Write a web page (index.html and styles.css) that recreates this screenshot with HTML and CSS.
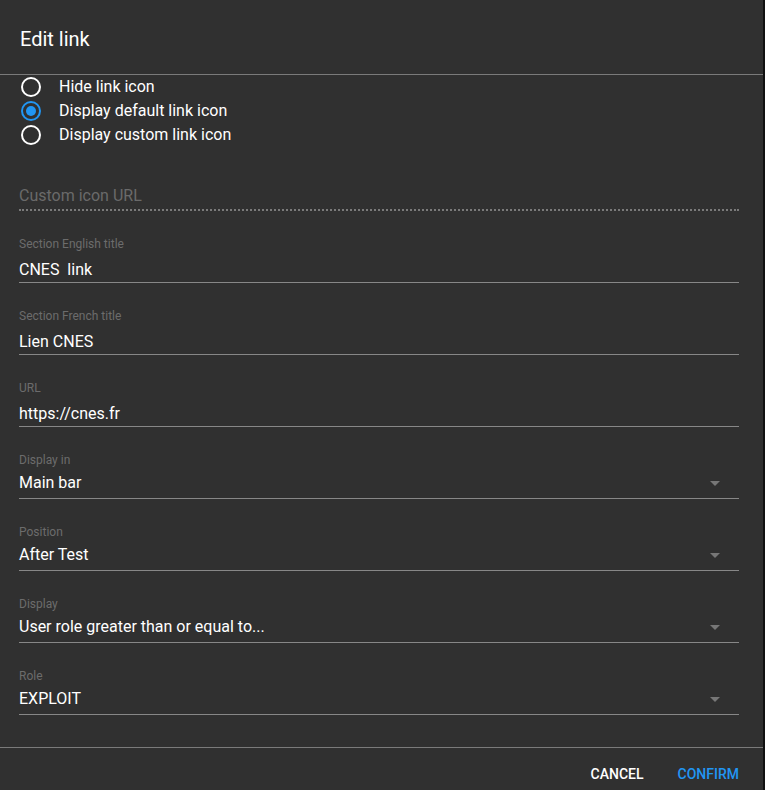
FILE: index.html
```html
<!DOCTYPE html>
<html lang="en">
<head>
<meta charset="utf-8">
<title>Edit link</title>
<link rel="stylesheet" href="styles.css">
</head>
<body>
<div class="dialog">
  <header class="dialog-header">
    <h1 class="dialog-title">Edit link</h1>
  </header>
  <div class="dialog-content">
    <div class="radio-group">
      <div class="radio-row"><span class="radio"></span><span class="radio-label">Hide link icon</span></div>
      <div class="radio-row"><span class="radio checked"></span><span class="radio-label">Display default link icon</span></div>
      <div class="radio-row"><span class="radio"></span><span class="radio-label">Display custom link icon</span></div>
    </div>
    <div class="fields">
      <div class="field disabled">
        <div class="field-label"></div>
        <div class="field-value placeholder">Custom icon URL</div>
      </div>
      <div class="field">
        <div class="field-label">Section English title</div>
        <div class="field-value">CNES&nbsp; link</div>
      </div>
      <div class="field">
        <div class="field-label">Section French title</div>
        <div class="field-value">Lien CNES</div>
      </div>
      <div class="field">
        <div class="field-label">URL</div>
        <div class="field-value">https://cnes.fr</div>
      </div>
      <div class="field select">
        <div class="field-label">Display in</div>
        <div class="field-value"><span>Main bar</span><span class="arrow"></span></div>
      </div>
      <div class="field select">
        <div class="field-label">Position</div>
        <div class="field-value"><span>After Test</span><span class="arrow"></span></div>
      </div>
      <div class="field select">
        <div class="field-label">Display</div>
        <div class="field-value"><span>User role greater than or equal to...</span><span class="arrow"></span></div>
      </div>
      <div class="field select">
        <div class="field-label">Role</div>
        <div class="field-value"><span>EXPLOIT</span><span class="arrow"></span></div>
      </div>
    </div>
  </div>
  <footer class="dialog-actions">
    <button class="btn">CANCEL</button>
    <button class="btn primary">CONFIRM</button>
  </footer>
</div>
</body>
</html>
```
FILE: styles.css
```css
html, body {
  margin: 0;
  padding: 0;
  height: 790px;
  overflow: hidden;
  background: #111111;
}
body {
  font-family: Roboto, "Noto Sans", sans-serif;
  color: #ffffff;
}
.dialog {
  width: 763px;
  height: 790px;
  background: #303030;
  display: flex;
  flex-direction: column;
}
.dialog-header {
  padding: 23px 20px 19px;
  border-bottom: 1px solid #7a7a7a;
}
.dialog-title {
  margin: 0;
  font-size: 20px;
  line-height: 32px;
  font-weight: 400;
}
.dialog-content {
  padding: 0 24px 32px 19px;
}
.radio-group {
  display: flex;
  flex-direction: column;
}
.radio-row {
  display: flex;
  align-items: center;
  height: 24px;
  padding-left: 2px;
}
.radio {
  box-sizing: border-box;
  width: 20px;
  height: 20px;
  border: 2px solid #ffffff;
  border-radius: 50%;
  display: flex;
  align-items: center;
  justify-content: center;
}
.radio.checked {
  border-color: #2196f3;
}
.radio.checked::after {
  content: "";
  width: 10px;
  height: 10px;
  border-radius: 50%;
  background: #2196f3;
}
.radio-label {
  margin-left: 18px;
  font-size: 16px;
  line-height: 24px;
}
.fields {
  margin-top: 15px;
  display: flex;
  flex-direction: column;
  gap: 24px;
}
.field {
  border-bottom: 1px solid #878787;
}
.field.disabled {
  border-bottom: 2px dotted #7a7a7a;
}
.field-label {
  padding-top: 1px;
  font-size: 12px;
  line-height: 16px;
  height: 16px;
  color: #6c6c6c;
}
.field.disabled .field-label {
  padding-top: 0;
}
.field-value {
  margin-top: 8px;
  padding-bottom: 2px;
  font-size: 16px;
  line-height: 20px;
}
.field-value.placeholder {
  color: #6a6a6a;
  padding-bottom: 3px;
}
.field.select .field-value {
  margin-top: 5px;
  padding-bottom: 5px;
  display: flex;
  align-items: center;
  justify-content: space-between;
}
.arrow {
  width: 0;
  height: 0;
  border-left: 5px solid transparent;
  border-right: 5px solid transparent;
  border-top: 5px solid #777777;
  margin-right: 19px;
}
.dialog-actions {
  border-top: 1px solid #7a7a7a;
  padding: 8px;
  display: flex;
  justify-content: flex-end;
  gap: 2px;
}
.btn {
  font-family: Roboto, "Noto Sans", sans-serif;
  font-size: 14px;
  font-weight: 500;
  line-height: 36px;
  height: 36px;
  padding: 0 16px;
  border: none;
  background: transparent;
  color: #ffffff;
}
.btn.primary {
  color: #2196f3;
}
```
